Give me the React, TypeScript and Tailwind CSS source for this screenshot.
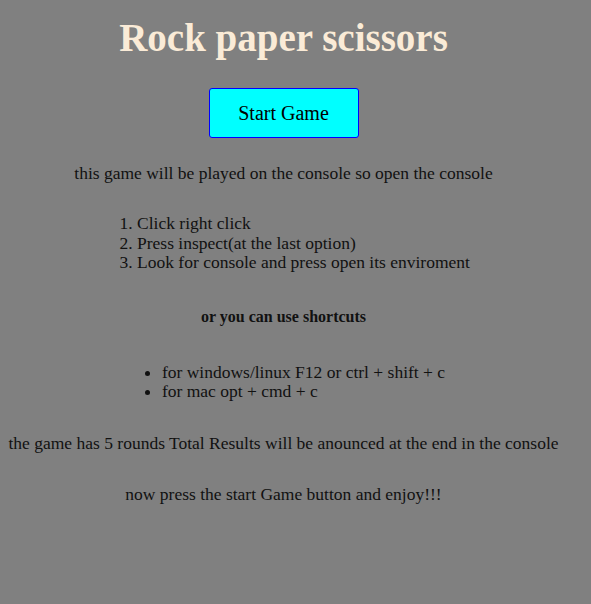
import React from "react";

export default function App() {
  return (
    <div className="min-h-[604px] w-full bg-[#808080]">
      <div className="w-[567px] text-center font-['Liberation_Serif',serif] text-[17.5px] text-[#111] pt-[18px]">
        <h1 className="text-[39px] leading-[40px] font-bold text-[#faebd7]">Rock paper scissors</h1>
        <div className="mt-[30px] flex justify-center">
          <button className="w-[150px] h-[50px] bg-[#00ffff] border border-[#0000ff] rounded-[3px] text-[20px] text-black">
            Start Game
          </button>
        </div>
        <p className="mt-[25px] leading-[20px]">this game will be played on the console so open the console</p>
        <div className="mt-[31px]">
          <ol className="inline-block text-left list-decimal pl-10 leading-[19.5px]">
            <li>Click right click</li>
            <li>Press inspect(at the last option)</li>
            <li>Look for console and press open its enviroment</li>
          </ol>
        </div>
        <p className="mt-[31.5px] leading-[20px] font-bold text-[16px]">or you can use shortcuts</p>
        <div className="mt-[36px]">
          <ul className="inline-block text-left list-disc pl-10 leading-[19.5px]">
            <li>for windows/linux F12 or ctrl + shift + c</li>
            <li>for mac opt + cmd + c</li>
          </ul>
        </div>
        <p className="mt-[28px] leading-[20px]">the game has 5 rounds Total Results will be anounced at the end in the console</p>
        <p className="mt-[31px] leading-[20px]">now press the start Game button and enjoy!!!</p>
      </div>
    </div>
  );
}
